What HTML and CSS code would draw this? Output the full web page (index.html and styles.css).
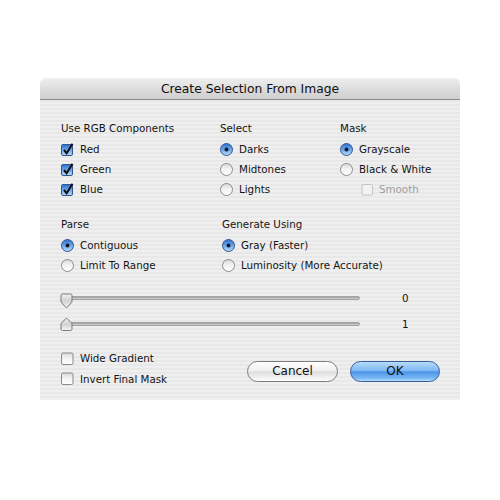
FILE: index.html
```html
<!DOCTYPE html>
<html>
<head>
<meta charset="utf-8">
<link rel="stylesheet" href="styles.css">
</head>
<body>
<svg class="defs" aria-hidden="true">
  <defs>
    <linearGradient id="gWhite" x1="0" y1="0" x2="0" y2="1">
      <stop offset="0" stop-color="#d8d8d8"/>
      <stop offset="0.5" stop-color="#f4f4f4"/>
      <stop offset="1" stop-color="#ffffff"/>
    </linearGradient>
    <linearGradient id="gBlue" x1="0" y1="0" x2="0" y2="1">
      <stop offset="0" stop-color="#2f6fd0"/>
      <stop offset="0.5" stop-color="#6aa6ea"/>
      <stop offset="1" stop-color="#b8dcfb"/>
    </linearGradient>
    <linearGradient id="gThumb" x1="0" y1="0" x2="0" y2="1">
      <stop offset="0" stop-color="#f2f2f2"/>
      <stop offset="0.5" stop-color="#d2d2d2"/>
      <stop offset="1" stop-color="#f6f6f6"/>
    </linearGradient>
  </defs>
</svg>

<div class="dialog">
  <div class="titlebar">Create Selection From Image</div>
  <div class="content">
    <div class="top">
      <div class="group">
        <div class="label">Use RGB Components</div>
        <div class="opt"><svg viewBox="0 0 13 13"><rect x="0.5" y="1.5" width="11" height="11" rx="1.5" fill="url(#gBlue)" stroke="#34568c"/><path d="M3 7 L5.6 10.2 L11.5 0.8" fill="none" stroke="#111" stroke-width="2"/></svg><span>Red</span></div>
        <div class="opt"><svg viewBox="0 0 13 13"><rect x="0.5" y="1.5" width="11" height="11" rx="1.5" fill="url(#gBlue)" stroke="#34568c"/><path d="M3 7 L5.6 10.2 L11.5 0.8" fill="none" stroke="#111" stroke-width="2"/></svg><span>Green</span></div>
        <div class="opt"><svg viewBox="0 0 13 13"><rect x="0.5" y="1.5" width="11" height="11" rx="1.5" fill="url(#gBlue)" stroke="#34568c"/><path d="M3 7 L5.6 10.2 L11.5 0.8" fill="none" stroke="#111" stroke-width="2"/></svg><span>Blue</span></div>
      </div>
      <div class="group">
        <div class="label">Select</div>
        <div class="opt"><svg viewBox="0 0 13 13"><circle cx="6.5" cy="6.5" r="6" fill="url(#gBlue)" stroke="#36598f"/><circle cx="6.5" cy="6.5" r="2" fill="#141a2a"/></svg><span>Darks</span></div>
        <div class="opt"><svg viewBox="0 0 13 13"><circle cx="6.5" cy="6.5" r="6" fill="url(#gWhite)" stroke="#8a8a8a"/></svg><span>Midtones</span></div>
        <div class="opt"><svg viewBox="0 0 13 13"><circle cx="6.5" cy="6.5" r="6" fill="url(#gWhite)" stroke="#8a8a8a"/></svg><span>Lights</span></div>
      </div>
      <div class="group">
        <div class="label">Mask</div>
        <div class="opt"><svg viewBox="0 0 13 13"><circle cx="6.5" cy="6.5" r="6" fill="url(#gBlue)" stroke="#36598f"/><circle cx="6.5" cy="6.5" r="2" fill="#141a2a"/></svg><span>Grayscale</span></div>
        <div class="opt"><svg viewBox="0 0 13 13"><circle cx="6.5" cy="6.5" r="6" fill="url(#gWhite)" stroke="#8a8a8a"/></svg><span>Black &amp; White</span></div>
        <div class="opt indent disabled"><svg viewBox="0 0 13 13"><rect x="1" y="1.5" width="10.5" height="10.5" rx="1" fill="#f2f2f2" stroke="#c4c4c4"/></svg><span>Smooth</span></div>
      </div>
    </div>

    <div class="second">
      <div class="group">
        <div class="label">Parse</div>
        <div class="opt"><svg viewBox="0 0 13 13"><circle cx="6.5" cy="6.5" r="6" fill="url(#gBlue)" stroke="#36598f"/><circle cx="6.5" cy="6.5" r="2" fill="#141a2a"/></svg><span>Contiguous</span></div>
        <div class="opt"><svg viewBox="0 0 13 13"><circle cx="6.5" cy="6.5" r="6" fill="url(#gWhite)" stroke="#8a8a8a"/></svg><span>Limit To Range</span></div>
      </div>
      <div class="group">
        <div class="label">Generate Using</div>
        <div class="opt"><svg viewBox="0 0 13 13"><circle cx="6.5" cy="6.5" r="6" fill="url(#gBlue)" stroke="#36598f"/><circle cx="6.5" cy="6.5" r="2" fill="#141a2a"/></svg><span>Gray (Faster)</span></div>
        <div class="opt"><svg viewBox="0 0 13 13"><circle cx="6.5" cy="6.5" r="6" fill="url(#gWhite)" stroke="#8a8a8a"/></svg><span>Luminosity (More Accurate)</span></div>
      </div>
    </div>

    <div class="sliders">
      <div class="slider">
        <div class="track-wrap">
          <div class="track"></div>
          <svg class="thumb down" viewBox="0 0 13 16"><path d="M1 2.5 Q1 1 2.5 1 H10.5 Q12 1 12 2.5 V9 L6.5 15 L1 9 Z" fill="url(#gThumb)" stroke="#7a7a7a"/></svg>
        </div>
        <span class="value">0</span>
      </div>
      <div class="slider">
        <div class="track-wrap">
          <div class="track"></div>
          <svg class="thumb up" viewBox="0 0 13 16"><path d="M6.5 1 L12 6.5 V12 Q12 13.5 10.5 13.5 H2.5 Q1 13.5 1 12 V6.5 Z" fill="url(#gThumb)" stroke="#7a7a7a"/></svg>
        </div>
        <span class="value">1</span>
      </div>
    </div>

    <div class="bottom">
      <div class="checks">
        <div class="opt"><svg viewBox="0 0 13 13"><rect x="0.5" y="1" width="11.5" height="11.5" rx="1.5" fill="url(#gWhite)" stroke="#8a8a8a"/></svg><span>Wide Gradient</span></div>
        <div class="opt"><svg viewBox="0 0 13 13"><rect x="0.5" y="1" width="11.5" height="11.5" rx="1.5" fill="url(#gWhite)" stroke="#8a8a8a"/></svg><span>Invert Final Mask</span></div>
      </div>
      <div class="buttons">
        <div class="btn cancel">Cancel</div>
        <div class="btn ok">OK</div>
      </div>
    </div>
  </div>
</div>
</body>
</html>
```

FILE: styles.css
```css
body {
  margin: 0;
  background: #ffffff;
  font-family: "DejaVu Sans", sans-serif;
  font-size: 10.3px;
  color: #141414;
}

.defs {
  position: absolute;
  width: 0;
  height: 0;
}

.dialog {
  margin: 78px 0 0 40px;
  width: 420px;
  height: 322px;
  border-radius: 6px 6px 0 0;
  overflow: hidden;
  display: flex;
  flex-direction: column;
  background: repeating-linear-gradient(to bottom, #efefef 0 2px, #e8e8e8 2px 4px);
}

.titlebar {
  height: 21px;
  line-height: 22px;
  border-bottom: 1px solid #8c8c8c;
  background: linear-gradient(#efefef, #dadada 60%, #cfcfcf);
  text-align: center;
  font-size: 12.3px;
  color: #111;
}

.content {
  padding: 18px 20px 0 21px;
}

.top {
  display: grid;
  grid-template-columns: 159px 120px 1fr;
}

.second {
  display: grid;
  grid-template-columns: 161px 1fr;
  margin-top: 15px;
}

.label {
  height: 20px;
  line-height: 20px;
  margin-bottom: 1px;
}

.opt {
  display: flex;
  align-items: center;
  gap: 6px;
  height: 20px;
  white-space: nowrap;
}

.opt svg {
  width: 13px;
  height: 13px;
  flex: none;
}

.opt.indent {
  padding-left: 21px;
  gap: 5px;
}

.opt.disabled {
  color: #a0a0a0;
}

.sliders {
  margin-top: 10px;
}

.slider {
  display: flex;
  align-items: center;
  height: 26px;
}

.track-wrap {
  position: relative;
  width: 300px;
  height: 18px;
  margin-left: -1px;
  display: flex;
  align-items: center;
}

.track {
  margin-left: 5px;
  flex: 1;
  height: 2px;
  border-radius: 2px;
  border: 1px solid #a4a4a4;
  background: linear-gradient(#9a9a9a, #d8d8d8);
}

.thumb {
  position: absolute;
  left: 0;
  width: 13px;
  height: 16px;
}

.thumb.down {
  top: 4px;
}

.thumb.up {
  top: 2px;
}

.value {
  margin-left: 42px;
}

.bottom {
  display: flex;
  margin-top: 11px;
}

.checks .opt:last-child {
  height: 21px;
}

.buttons {
  margin-left: auto;
  margin-top: 13px;
  display: flex;
  gap: 12px;
}

.btn {
  box-sizing: border-box;
  width: 91px;
  height: 21px;
  border-radius: 11px;
  text-align: center;
  line-height: 19px;
  font-size: 12px;
  color: #111;
}

.btn.cancel {
  border: 1px solid #7c7c7c;
  background: linear-gradient(#ffffff, #f0f0f0 45%, #dedede 52%, #f3f3f3 85%, #ffffff);
}

.btn.ok {
  width: 90px;
  border: 1px solid #3a5d99;
  background: linear-gradient(#b6dbfb, #7db8f1 45%, #4a94e8 52%, #78b8f5 85%, #b4e0ff);
}
```
